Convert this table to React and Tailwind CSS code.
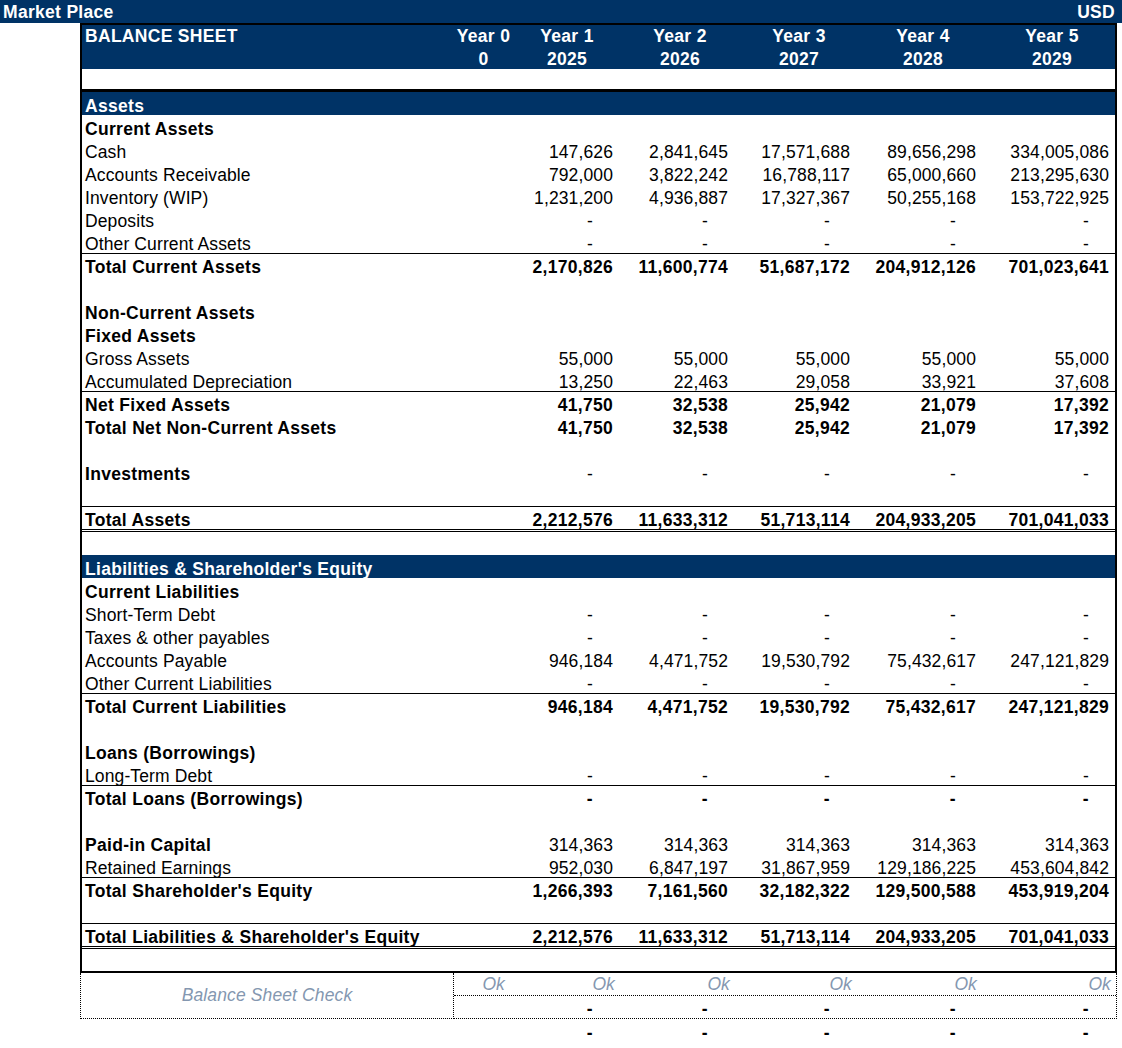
import React from 'react';

const D = ['-', '-', '-', '-', '-'];
const B = 'font-bold tracking-[0.3px]';

const cols = [
  { w: 'w-[104px]', hd: 'pl-[4px]', pr: 'pr-[4px]', dash: 'pr-[24px]', ok: 'pr-[2px]' },
  { w: 'w-[115px]', hd: 'pl-[11px]', pr: 'pr-[4px]', dash: 'pr-[24px]', ok: 'pr-[2px]' },
  { w: 'w-[122px]', hd: 'pl-[12px]', pr: 'pr-[4px]', dash: 'pr-[24px]', ok: 'pr-[2px]' },
  { w: 'w-[126px]', hd: 'pl-[12px]', pr: 'pr-[4px]', dash: 'pr-[24px]', ok: 'pr-[3px]' },
  { w: 'w-[135px]', hd: 'pl-[9px]', pr: 'pr-[6px]', dash: 'pr-[26px]', ok: 'pr-[4px]' },
];

const years = [
  ['Year 1', '2025'],
  ['Year 2', '2026'],
  ['Year 3', '2027'],
  ['Year 4', '2028'],
  ['Year 5', '2029'],
];

const totalAssets = ['2,212,576', '11,633,312', '51,713,114', '204,933,205', '701,041,033'];
const netFixed = ['41,750', '32,538', '25,942', '21,079', '17,392'];
const payables = ['946,184', '4,471,752', '19,530,792', '75,432,617', '247,121,829'];

const rows = [
  { section: 'Assets' },
  { label: 'Current Assets', bold: true },
  { label: 'Cash', v: ['147,626', '2,841,645', '17,571,688', '89,656,298', '334,005,086'] },
  { label: 'Accounts Receivable', v: ['792,000', '3,822,242', '16,788,117', '65,000,660', '213,295,630'] },
  { label: 'Inventory (WIP)', v: ['1,231,200', '4,936,887', '17,327,367', '50,255,168', '153,722,925'] },
  { label: 'Deposits', v: D },
  { label: 'Other Current Assets', v: D },
  { label: 'Total Current Assets', bold: true, vBold: true, top: true, v: ['2,170,826', '11,600,774', '51,687,172', '204,912,126', '701,023,641'] },
  {},
  { label: 'Non-Current Assets', bold: true },
  { label: 'Fixed Assets', bold: true },
  { label: 'Gross Assets', v: ['55,000', '55,000', '55,000', '55,000', '55,000'] },
  { label: 'Accumulated Depreciation', v: ['13,250', '22,463', '29,058', '33,921', '37,608'] },
  { label: 'Net Fixed Assets', bold: true, vBold: true, top: true, v: netFixed },
  { label: 'Total Net Non-Current Assets', bold: true, vBold: true, v: netFixed },
  {},
  { label: 'Investments', bold: true, v: D },
  {},
  { label: 'Total Assets', bold: true, vBold: true, top: true, double: true, v: totalAssets },
  {},
  { section: "Liabilities & Shareholder's Equity" },
  { label: 'Current Liabilities', bold: true },
  { label: 'Short-Term Debt', v: D },
  { label: 'Taxes & other payables', v: D },
  { label: 'Accounts Payable', v: payables },
  { label: 'Other Current Liabilities', v: D },
  { label: 'Total Current Liabilities', bold: true, vBold: true, top: true, v: payables },
  {},
  { label: 'Loans (Borrowings)', bold: true },
  { label: 'Long-Term Debt', v: D },
  { label: 'Total Loans (Borrowings)', bold: true, vBold: true, top: true, v: D },
  {},
  { label: 'Paid-in Capital', bold: true, v: ['314,363', '314,363', '314,363', '314,363', '314,363'] },
  { label: 'Retained Earnings', v: ['952,030', '6,847,197', '31,867,959', '129,186,225', '453,604,842'] },
  { label: "Total Shareholder's Equity", bold: true, vBold: true, top: true, v: ['1,266,393', '7,161,560', '32,182,322', '129,500,588', '453,919,204'] },
  {},
  { label: "Total Liabilities & Shareholder's Equity", bold: true, vBold: true, top: true, double: true, v: totalAssets },
];

const Row = ({ row }) => {
  if (row.section) {
    return (
      <div className={`h-[23px] flex items-end bg-[#003366] text-white leading-[18px] pl-[3px] ${B}`}>
        {row.section}
      </div>
    );
  }

  let cls = 'h-[23px] flex items-end leading-[18px]';
  if (row.top) cls += ' border-t border-black';
  if (row.double) cls = 'h-[26px] flex items-end leading-[18px] border-t border-black border-b-[3px] border-double';

  return (
    <div className={cls}>
      <div className={`w-[372px] pl-[3px] whitespace-nowrap ${row.bold ? B : ''}`}>
        {row.label}
      </div>
      <div className="w-[59px]" />
      {cols.map((c, i) => {
        const val = row.v ? row.v[i] : '';
        const isDash = val === '-';
        return (
          <div
            key={i}
            className={`${c.w} text-right whitespace-nowrap ${isDash ? c.dash : c.pr} ${row.vBold ? B : ''}`}
          >
            {val}
          </div>
        );
      })}
    </div>
  );
};

export default function App() {
  return (
    <div className="w-[1122px] min-h-[1048px] bg-white text-black text-[17.5px] tracking-[0.12px] font-['Liberation_Sans',Arial,sans-serif]">
      <div className={`h-[23px] bg-[#003366] text-white flex items-end justify-between leading-[20px] pb-[1px] pl-[3px] pr-[7px] ${B}`}>
        <span>Market Place</span>
        <span>USD</span>
      </div>

      <div className="ml-[80px] w-[1037px] border-2 border-black">
        <div className={`bg-[#003366] text-white ${B}`}>
          <div className="h-[22px] flex items-end leading-[20px] pb-[1px]">
            <div className="w-[372px] pl-[3px]">BALANCE SHEET</div>
            <div className="w-[59px] text-center">Year 0</div>
            {cols.map((c, i) => (
              <div key={i} className={`${c.w} ${c.hd} text-center`}>{years[i][0]}</div>
            ))}
          </div>
          <div className="h-[22px] flex items-end leading-[20px]">
            <div className="w-[372px]" />
            <div className="w-[59px] text-center">0</div>
            {cols.map((c, i) => (
              <div key={i} className={`${c.w} ${c.hd} text-center`}>{years[i][1]}</div>
            ))}
          </div>
        </div>
        <div className="h-[23px] border-b-[3px] border-black" />

        {rows.map((r, i) => (
          <Row key={i} row={r} />
        ))}
        <div className="h-[22px]" />
      </div>

      <div className="ml-[80px] w-[1037px] flex">
        <div className="w-[374px] h-[46px] border-l border-r border-b border-dotted border-black flex items-center justify-center italic text-[#8497b0]">
          Balance Sheet Check
        </div>
        <div className="flex-1 border-r border-b border-dotted border-black">
          <div className="h-[23px] flex items-center border-b border-dotted border-black italic text-[#8497b0]">
            <div className="w-[59px] text-right pr-[8px]">Ok</div>
            {cols.map((c, i) => (
              <div key={i} className={`${c.w} text-right ${c.ok}`}>Ok</div>
            ))}
          </div>
          <div className={`h-[22px] flex items-end leading-[18px] ${B}`}>
            <div className="w-[59px]" />
            {cols.map((c, i) => (
              <div key={i} className={`${c.w} text-right ${c.dash}`}>-</div>
            ))}
          </div>
        </div>
      </div>
      <div className={`ml-[80px] w-[1037px] h-[23px] flex items-end leading-[18px] ${B}`}>
        <div className="w-[374px]" />
        <div className="w-[59px]" />
        {cols.map((c, i) => (
          <div key={i} className={`${c.w} text-right ${c.dash}`}>-</div>
        ))}
      </div>
    </div>
  );
}
